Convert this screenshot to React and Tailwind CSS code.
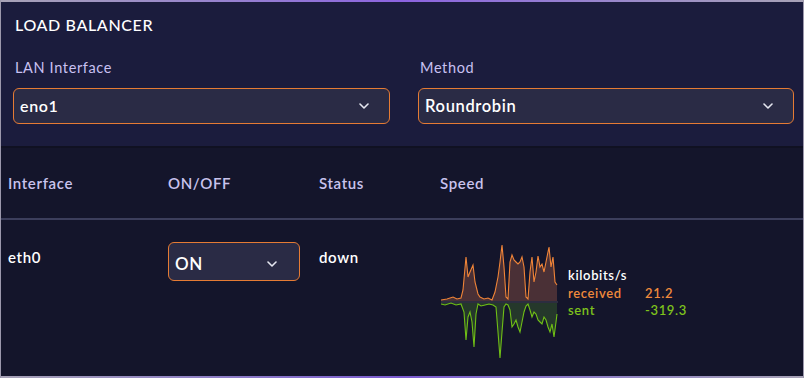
import React from 'react';

const received = [
  [0, 2], [6, 3], [12, 5], [16, 3], [20, 4], [22, 12], [25, 45], [27, 25], [29, 30], [32, 37], [34, 20], [37, 8],
  [39, 5], [43, 3], [47, 4], [51, 2], [54, 10], [57, 25], [59, 40], [61, 57], [63, 35], [65, 5], [67, 3],
  [69, 40], [71, 47], [73, 42], [75, 40], [77, 38], [79, 40], [81, 45], [83, 35], [85, 5], [87, 3],
  [89, 30], [91, 45], [93, 20], [95, 30], [97, 46], [99, 35], [101, 38], [103, 30], [105, 40], [108, 55],
  [110, 35], [112, 45], [114, 20], [116, 17],
];

const sent = [
  [0, 2], [4, 3], [10, 1], [15, 3], [20, 2], [23, 10], [25, 38], [27, 15], [29, 10], [31, 20], [33, 45],
  [35, 12], [37, 2], [40, 4], [44, 3], [48, 2], [52, 3], [55, 5], [57, 30], [59, 56], [61, 30], [63, 5],
  [65, 2], [67, 3], [69, 8], [71, 25], [73, 22], [75, 18], [77, 25], [79, 30], [81, 20], [83, 10], [85, 4],
  [87, 2], [89, 8], [91, 15], [93, 10], [95, 12], [97, 18], [99, 20], [101, 22], [103, 15], [105, 18],
  [107, 25], [109, 30], [111, 22], [113, 35], [115, 20], [116, 12],
];

const BASE = 60;

const linePath = (pts, dir) =>
  pts.map(([x, v], i) => `${i ? 'L' : 'M'}${x} ${BASE + dir * v}`).join(' ');

const areaPath = (pts, dir) => `${linePath(pts, dir)} L116 ${BASE} L0 ${BASE} Z`;

const Chevron = () => (
  <svg width="10" height="6" viewBox="0 0 10 6" fill="none">
    <path d="M1 1l4 4 4-4" stroke="#e5e7f0" strokeWidth="1.6" strokeLinecap="round" strokeLinejoin="round" />
  </svg>
);

const Select = ({ value, className }) => (
  <div
    className={`flex items-center justify-between rounded-md border border-[#e57b34] bg-[#2a2b45] pl-[6px] pr-[20px] font-semibold text-white ${className}`}
  >
    <span>{value}</span>
    <Chevron />
  </div>
);

const SpeedChart = () => (
  <svg width="117" height="120" viewBox="0 0 117 120">
    <path d={areaPath(received, -1)} fill="#4a3036" />
    <path d={areaPath(sent, 1)} fill="#25382b" />
    <rect x="0" y={BASE - 1} width="117" height="2" fill="#2c2d40" />
    <path d={linePath(received, -1)} fill="none" stroke="#f08438" strokeWidth="1.1" />
    <path d={linePath(sent, 1)} fill="none" stroke="#6fbf16" strokeWidth="1.1" />
  </svg>
);

export default function App() {
  return (
    <div
      className="flex h-[378px] w-[804px] flex-col overflow-hidden border-x border-[#9c98ac] bg-[#14152b] tracking-[0.04em]"
      style={{ fontFamily: 'Lato, "Open Sans", sans-serif' }}
    >
      <div className="h-[2px] bg-gradient-to-r from-[#a7a2b6] via-[#8c63e0] to-[#a7a2b6]" />

      {/* Settings */}
      <div className="h-[144px] bg-[#1b1c3d] pl-[12px] pr-[9px]">
        <h2 className="pl-[2px] pt-[12px] text-[16px] font-medium leading-[22px] text-white">
          LOAD BALANCER
        </h2>
        <div className="mt-[23px] flex justify-between">
          <div className="w-[377px]">
            <div className="pl-[2px] text-[14.5px] leading-[18px] text-[#c9c1f2]">LAN Interface</div>
            <Select value="eno1" className="mt-[11px] h-[36px] text-[16px]" />
          </div>
          <div className="w-[376px]">
            <div className="pl-[2px] text-[14.5px] leading-[18px] text-[#c9c1f2]">Method</div>
            <Select value="Roundrobin" className="mt-[11px] h-[36px] text-[16.5px]" />
          </div>
        </div>
      </div>
      <div className="h-[2px] bg-[#101122]" />

      {/* Table */}
      <div className="grid h-[70px] grid-cols-[160px_151px_121px_1fr] items-center pl-[7px] text-[15px] font-semibold text-[#c9c3ee]">
        <div>Interface</div>
        <div>ON/OFF</div>
        <div>Status</div>
        <div>Speed</div>
      </div>
      <div className="h-[2px] bg-[#3c3e5c]" />

      <div className="grid grid-cols-[160px_151px_121px_1fr] pl-[7px] pt-[22px] text-[15px] font-semibold text-white">
        <div className="pt-[4px]">eth0</div>
        <div>
          <Select value="ON" className="h-[39px] w-[132px] pr-[22px] pt-[4px] text-[17px]" />
        </div>
        <div className="pt-[4px]">down</div>
        <div className="flex items-start gap-[10px] pl-[1px]">
          <SpeedChart />
          <div className="mt-[25px] text-[13px] font-semibold leading-[17.5px]">
            <div className="text-white">kilobits/s</div>
            <div className="flex text-[#f08a3c]">
              <span className="w-[77px]">received</span>
              <span>21.2</span>
            </div>
            <div className="flex text-[#7dc21c]">
              <span className="w-[77px]">sent</span>
              <span>-319.3</span>
            </div>
          </div>
        </div>
      </div>

      <div className="flex-1" />
      <div className="h-[2px] bg-gradient-to-r from-[#a7a2b6] via-[#7b5ad0] to-[#a7a2b6]" />
    </div>
  );
}
